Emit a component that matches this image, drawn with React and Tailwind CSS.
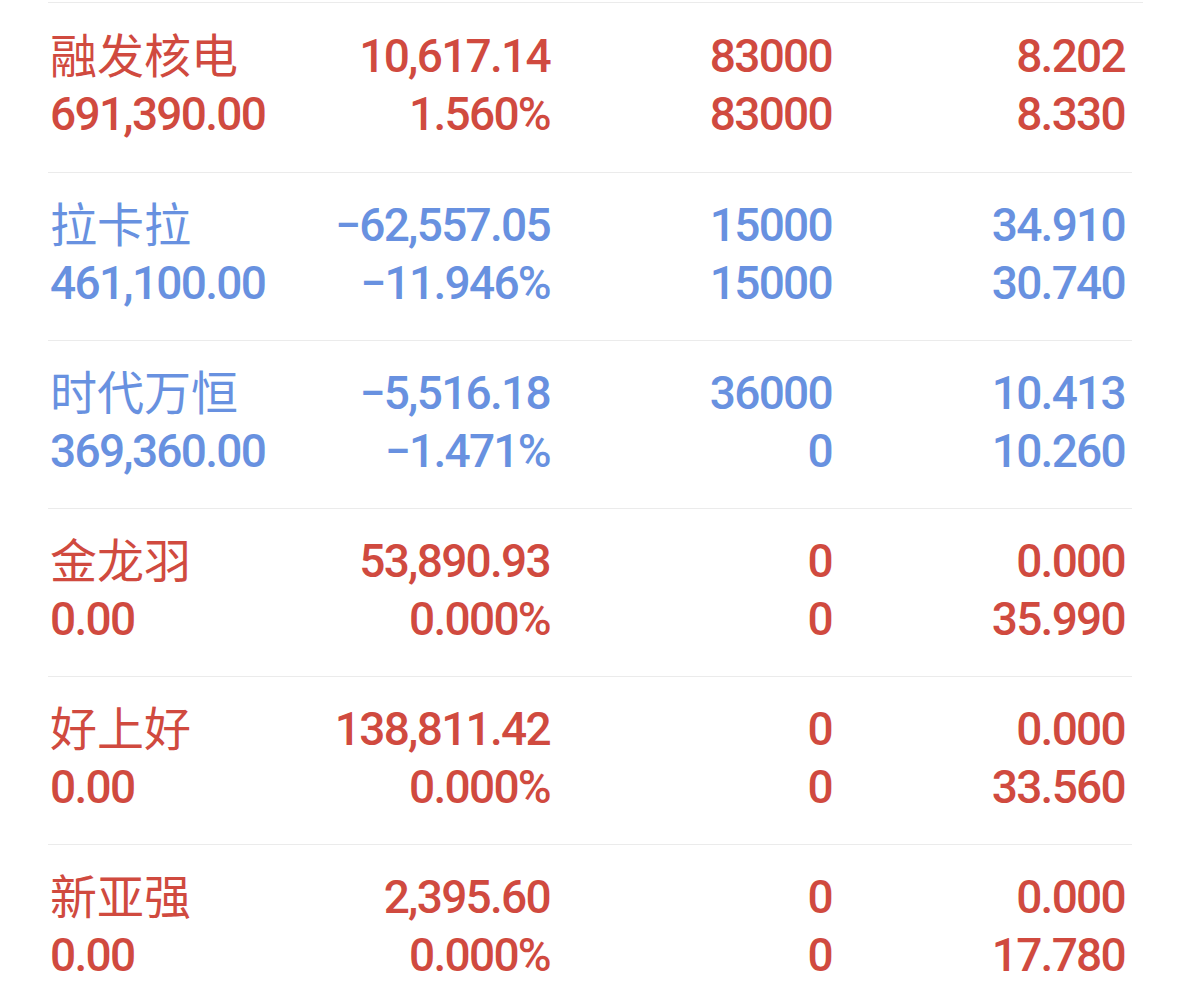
const rows = [
  { name: "融发核电", up: true, amount: "691,390.00", pnl: "10,617.14", pct: "1.560%", q1: "83000", q2: "83000", p1: "8.202", p2: "8.330" },
  { name: "拉卡拉", up: false, amount: "461,100.00", pnl: "−62,557.05", pct: "−11.946%", q1: "15000", q2: "15000", p1: "34.910", p2: "30.740" },
  { name: "时代万恒", up: false, amount: "369,360.00", pnl: "−5,516.18", pct: "−1.471%", q1: "36000", q2: "0", p1: "10.413", p2: "10.260" },
  { name: "金龙羽", up: true, amount: "0.00", pnl: "53,890.93", pct: "0.000%", q1: "0", q2: "0", p1: "0.000", p2: "35.990" },
  { name: "好上好", up: true, amount: "0.00", pnl: "138,811.42", pct: "0.000%", q1: "0", q2: "0", p1: "0.000", p2: "33.560" },
  { name: "新亚强", up: true, amount: "0.00", pnl: "2,395.60", pct: "0.000%", q1: "0", q2: "0", p1: "0.000", p2: "17.780" },
];

const num = "font-['Roboto',sans-serif] font-medium text-[46px] leading-[58px] tracking-[-1.7px]";

function Row({ r, first }) {
  return (
    <div
      className={`grid grid-cols-[250px_252px_282px_1fr] content-center pb-[6px] pr-[7px] ${
        first ? "h-[169px]" : "h-[168px] border-t border-[#ebebeb]"
      } ${r.up ? "text-[#d04a3f]" : "text-[#6891e0]"}`}
    >
      <div className="flex flex-col pl-[2px]">
        <div className="mb-[6px] font-['Noto_Sans_CJK_SC',sans-serif] text-[47px] leading-[52px]">{r.name}</div>
        <div className={num}>{r.amount}</div>
      </div>
      <div className="flex flex-col items-end">
        <div className={num}>{r.pnl}</div>
        <div className={num}>{r.pct}</div>
      </div>
      <div className="flex flex-col items-end">
        <div className={num}>{r.q1}</div>
        <div className={num}>{r.q2}</div>
      </div>
      <div className="flex flex-col items-end">
        <div className={num}>{r.p1}</div>
        <div className={num}>{r.p2}</div>
      </div>
    </div>
  );
}

export default function App() {
  return (
    <div className="h-[994px] w-[1179px] overflow-hidden bg-white pt-[2px]">
      <div className="ml-[48px] w-[1095px] border-t border-[#ebebeb]" />
      <div className="ml-[48px] w-[1084px]">
        {rows.map((r, i) => (
          <Row key={r.name} r={r} first={i === 0} />
        ))}
      </div>
    </div>
  );
}
